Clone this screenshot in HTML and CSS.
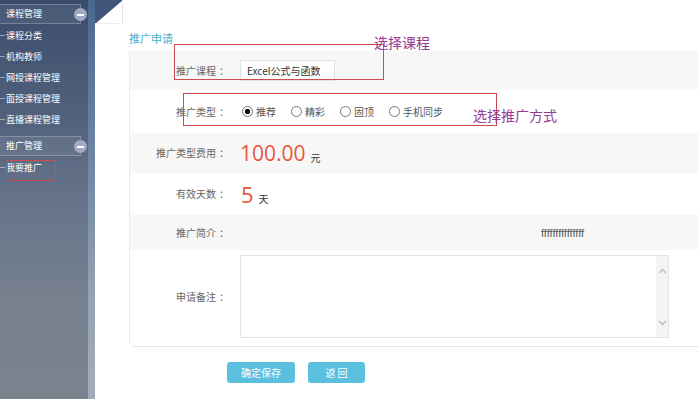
FILE: index.html
```html
<!DOCTYPE html>
<html lang="zh-CN">
<head>
  <meta charset="UTF-8">
  <title>推广申请</title>
  <link rel="stylesheet" href="styles.css">
</head>
<body>
  <div class="layout">
    <aside class="sidebar">
      <div class="menu-head">课程管理<span class="toggle"></span></div>
      <ul class="menu-list">
        <li>课程分类</li>
        <li>机构教师</li>
        <li>网授课程管理</li>
        <li>面授课程管理</li>
        <li>直播课程管理</li>
      </ul>
      <div class="menu-head second">推广管理<span class="toggle"></span></div>
      <ul class="menu-list">
        <li>我要推广</li>
      </ul>
    </aside>
    <div class="rail"></div>
    <main class="content">
      <svg class="corner" width="28" height="24" viewBox="0 0 28 24">
        <rect width="28" height="24" fill="#fff"/>
        <polygon points="0,0 28,0 0,24" fill="#3f5579"/>
        <line x1="27.5" y1="0" x2="27.5" y2="24" stroke="#e4e4e4"/>
        <line x1="0" y1="23.5" x2="28" y2="23.5" stroke="#ececec"/>
      </svg>
      <h2 class="page-title">推广申请</h2>
      <div class="form-panel">
        <div class="form-row shade r1">
          <label>推广课程<span class="colon">：</span></label>
          <div class="field"><input class="text-input" type="text" value="Excel公式与函数" readonly></div>
        </div>
        <div class="form-row r2">
          <label>推广类型<span class="colon">：</span></label>
          <div class="field radios">
            <span class="radio checked"><i></i>推荐</span>
            <span class="radio"><i></i>精彩</span>
            <span class="radio"><i></i>固顶</span>
            <span class="radio"><i></i>手机同步</span>
          </div>
        </div>
        <div class="form-row shade r3">
          <label>推广类型费用<span class="colon">：</span></label>
          <div class="field"><span class="amount">100.00</span><span class="unit">元</span></div>
        </div>
        <div class="form-row r4">
          <label>有效天数<span class="colon">：</span></label>
          <div class="field"><span class="amount days">5</span><span class="unit">天</span></div>
        </div>
        <div class="form-row shade r5">
          <label>推广简介<span class="colon">：</span></label>
          <div class="field"><span class="intro">fffffffffffffff</span></div>
        </div>
        <div class="form-row r6">
          <label>申请备注<span class="colon">：</span></label>
          <div class="field">
            <div class="textarea">
              <div class="textarea-body"></div>
              <div class="scrollbar">
                <svg width="9" height="6" viewBox="0 0 9 6"><polyline points="1,5 4.5,1.5 8,5" fill="none" stroke="#b9b9b9" stroke-width="1.3"/></svg>
                <svg width="9" height="6" viewBox="0 0 9 6"><polyline points="1,1 4.5,4.5 8,1" fill="none" stroke="#b9b9b9" stroke-width="1.3"/></svg>
              </div>
            </div>
          </div>
        </div>
      </div>
      <div class="panel-foot"></div>
      <div class="actions">
        <button class="btn save">确定保存</button>
        <button class="btn back">返 回</button>
      </div>
    </main>
  </div>

  <!-- 标注 -->
  <div class="mark mark-side"></div>
  <div class="mark mark-course"></div>
  <div class="mark mark-type"></div>
  <div class="note note-course">选择课程</div>
  <div class="note note-type">选择推广方式</div>
</body>
</html>
```

FILE: styles.css
```css
body { margin: 0; position: relative; height: 399px; overflow: hidden; background: #fff; font-family: "Noto Sans CJK SC", "Microsoft YaHei", sans-serif; }
.layout { display: flex; height: 399px; }

/* 左侧菜单 */
.sidebar { width: 88px; flex: none; box-sizing: border-box; padding-top: 4px; background: linear-gradient(180deg, #3b4d6c 0%, #4d5e79 25%, #66738a 50%, #76808e 75%, #7b838f 100%); color: #fff; font-size: 9px; }
.menu-head { position: relative; width: 81px; height: 20px; box-sizing: border-box; padding-left: 6px; line-height: 18px; border: 1px solid rgba(255,255,255,0.22); border-left: none; background: rgba(255,255,255,0.07); }
.menu-head.second { margin-top: 6px; }
.toggle { position: absolute; right: -7px; top: 3px; width: 13px; height: 13px; border-radius: 50%; background: #a3a9c2; }
.toggle::after { content: ""; position: absolute; left: 3px; top: 6px; width: 7px; height: 1.5px; background: #fff; }
.menu-list { list-style: none; margin: 0; padding: 1px 0 0 0; }
.menu-list li { position: relative; height: 21px; line-height: 21px; padding-left: 6px; }
.menu-list li::before { content: ""; position: absolute; left: 0; top: 10px; width: 5px; height: 1px; background: rgba(255,255,255,0.45); }
.rail { width: 7px; flex: none; background: linear-gradient(180deg, #4a6890 0%, #6f86a4 40%, #96a3b4 75%, #a3adb9 100%); }

/* 主体 */
.content { flex: 1; position: relative; padding: 31px 0 0 34px; }
.corner { position: absolute; left: 0; top: 0; }
.page-title { margin: 0 0 6px 0; font-size: 11px; line-height: 14px; font-weight: normal; color: #45b2cc; }
.form-panel { border-left: 1px solid #ebebeb; }
.form-row { display: grid; grid-template-columns: 96px 1fr; column-gap: 14px; align-items: center; }
.form-row.shade { background: #f7f7f7; }
.r1 { height: 39px; }
.r2 { height: 43px; }
.r3 { height: 40px; }
.r4 { height: 42px; }
.r5 { height: 35px; }
.r6 { height: 93px; }
.form-row label { text-align: right; font-size: 10px; line-height: 14px; color: #666; padding-right: 0; }
.colon { padding-left: 3px; margin-right: -3px; }
.field { display: flex; align-items: center; font-size: 10px; color: #333; }
.text-input { width: 95px; height: 21px; box-sizing: border-box; padding: 0 0 0 6px; border: 1px solid #e2e2e2; background: #fff; font-family: inherit; font-size: 10px; color: #333; outline: none; }
.radios { padding-left: 2px; color: #555; }
.radio { display: inline-flex; align-items: center; gap: 3px; margin-right: 15px; line-height: 14px; }
.radio i { width: 11px; height: 11px; box-sizing: border-box; border: 1px solid #777; border-radius: 50%; background: #fff; }
.radio.checked i { background: radial-gradient(circle, #111 0, #111 2.4px, #fff 3px); }
.field .amount { font-family: "Open Sans", "Liberation Sans", sans-serif; font-size: 21px; line-height: 26px; color: #e8553e; }
.field .amount.days { font-size: 22px; margin-left: 1px; }
.unit { font-size: 10px; color: #333; margin: 8px 0 0 5px; }
.intro { margin-left: 301px; font-family: "Liberation Sans", Arial, sans-serif; font-size: 11px; color: #555; }
.textarea { display: flex; width: 429px; height: 83px; box-sizing: border-box; border: 1px solid #e3e3e3; background: #fff; margin-top: -1px; }
.textarea-body { flex: 1; }
.scrollbar { width: 12px; background: #f4f4f4; display: flex; flex-direction: column; align-items: center; justify-content: space-between; padding: 12px 0 11px 0; }
.panel-foot { margin: 3px 0 0 4px; border-top: 1px solid #e4e4e4; }
.actions { display: flex; gap: 13px; padding: 15px 0 0 98px; }
.btn { height: 21px; padding: 0; border: none; border-radius: 3px; background: #5bc0de; color: #fff; font-family: inherit; font-size: 10px; cursor: pointer; }
.btn.save { width: 68px; }
.btn.back { width: 57px; }

/* 标注 */
.mark { position: absolute; border: 1px solid #cd4b4d; }
.mark-side { left: 7px; top: 160px; width: 47px; height: 19px; }
.mark-course { left: 174px; top: 44px; width: 208px; height: 34px; }
.mark-type { left: 183px; top: 93px; width: 312px; height: 31px; }
.note { position: absolute; font-size: 14px; line-height: 16px; color: #943b94; }
.note-course { left: 374px; top: 34px; }
.note-type { left: 473px; top: 107px; }
```
